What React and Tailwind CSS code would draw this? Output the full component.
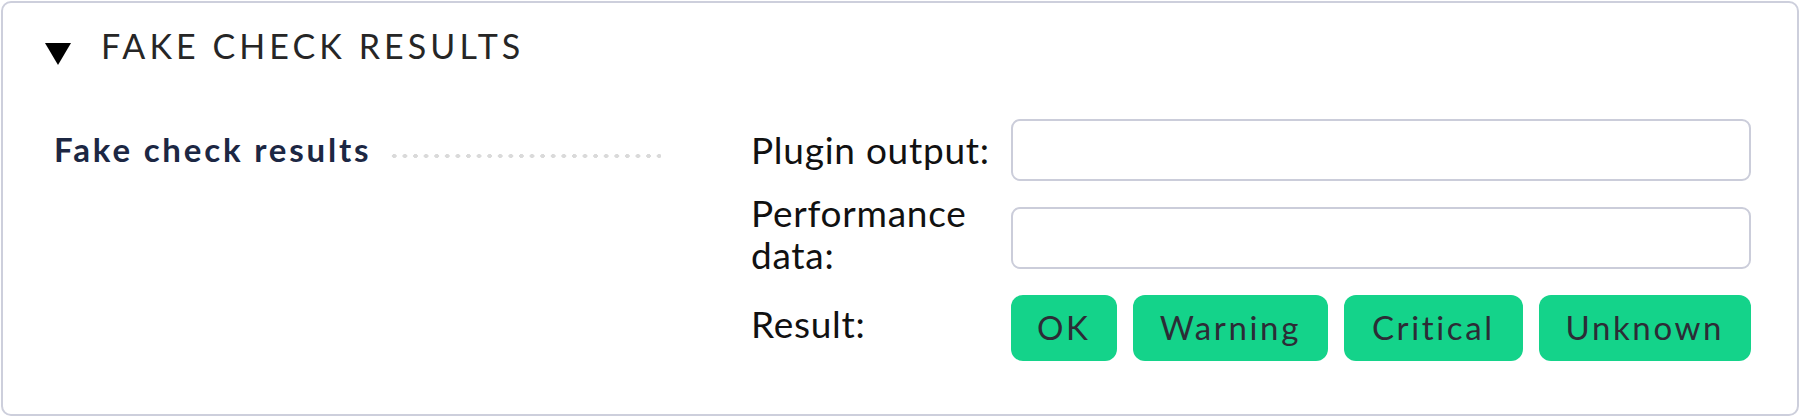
export default function App() {
  const font = { fontFamily: "Lato, 'Noto Sans', sans-serif" };
  return (
    <div style={font} className="w-[1800px] h-[417px] bg-white p-[1px]">
      <div className="h-full border-[2px] border-[#cdcfdc] rounded-[10px] bg-white">
        <div className="flex items-center h-[92px] pl-[42px] pb-[6px]">
          <svg width="26" height="22" viewBox="0 0 26 22" className="mt-[15px]">
            <polygon points="0,0 26,0 13,22" fill="#000" />
          </svg>
          <span className="ml-[30px] text-[34px] leading-none tracking-[0.12em] text-[#262626]">
            FAKE CHECK RESULTS
          </span>
        </div>
        <div className="flex pl-[51px] pt-[24px]">
          <div className="w-[607px] flex items-center h-[62px]">
            <span className="text-[33px] font-bold tracking-[0.085em] text-[#1c2743] whitespace-nowrap">
              Fake check results
            </span>
            <div className="flex-1 ml-[18px] h-[4px] mt-[12px] bg-[radial-gradient(circle,#dadada_2px,transparent_2.2px)] bg-[length:10.6px_4px] bg-repeat-x" />
          </div>
          <div className="ml-[90px] grid grid-cols-[260px_740px] grid-rows-[62px_62px_66px] gap-y-[26px] text-[37px] tracking-[0.02em] text-[#111]">
            <div className="flex items-center">Plugin output:</div>
            <div className="border-[2px] border-[#cbcdda] rounded-[9px] bg-white" />
            <div className="leading-[42px] -mt-[15px]">Performance<br />data:</div>
            <div className="border-[2px] border-[#cbcdda] rounded-[9px] bg-white" />
            <div className="mt-[8px] leading-[42px]">Result:</div>
            <div className="flex gap-[16px]">
              {[
                ["OK", "w-[106px]"],
                ["Warning", "w-[196px]"],
                ["Critical", "w-[179px]"],
                ["Unknown", "w-[213px]"],
              ].map(([t, w]) => (
                <div
                  key={t}
                  className={`${w} h-[66px] rounded-[12px] bg-[#14d38a] flex items-center justify-center text-[33px] tracking-[0.08em] text-[#2c2c36]`}
                >
                  {t}
                </div>
              ))}
            </div>
          </div>
        </div>
      </div>
    </div>
  );
}
